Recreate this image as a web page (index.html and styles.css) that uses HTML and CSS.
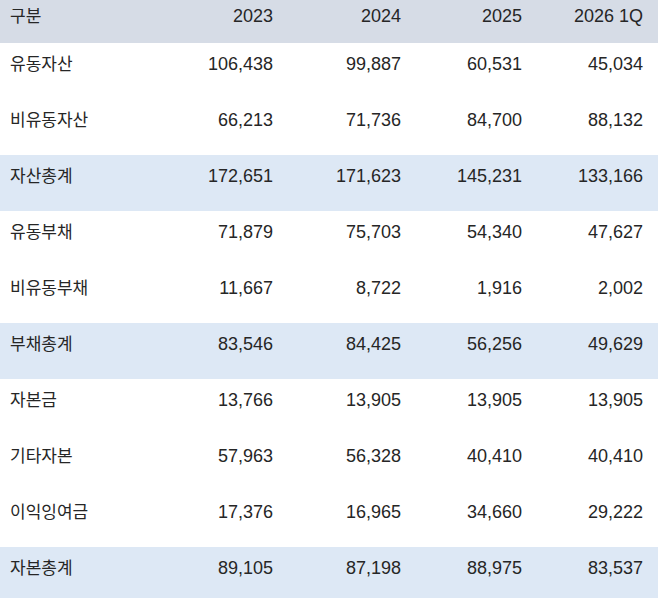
FILE: index.html
```html
<!DOCTYPE html>
<html lang="ko">
<head>
<meta charset="utf-8">
<title>재무상태표</title>
<link rel="stylesheet" href="styles.css">
</head>
<body>
<table class="fin">
  <colgroup>
    <col class="c-label"><col class="c-2023"><col class="c-2024"><col class="c-2025"><col class="c-2026">
  </colgroup>
  <thead>
    <tr class="head">
      <th class="label">구분</th><th>2023</th><th>2024</th><th>2025</th><th>2026 1Q</th>
    </tr>
  </thead>
  <tbody>
    <tr><td class="label">유동자산</td><td>106,438</td><td>99,887</td><td>60,531</td><td>45,034</td></tr>
    <tr><td class="label">비유동자산</td><td>66,213</td><td>71,736</td><td>84,700</td><td>88,132</td></tr>
    <tr class="total"><td class="label">자산총계</td><td>172,651</td><td>171,623</td><td>145,231</td><td>133,166</td></tr>
    <tr><td class="label">유동부채</td><td>71,879</td><td>75,703</td><td>54,340</td><td>47,627</td></tr>
    <tr><td class="label">비유동부채</td><td>11,667</td><td>8,722</td><td>1,916</td><td>2,002</td></tr>
    <tr class="total"><td class="label">부채총계</td><td>83,546</td><td>84,425</td><td>56,256</td><td>49,629</td></tr>
    <tr><td class="label">자본금</td><td>13,766</td><td>13,905</td><td>13,905</td><td>13,905</td></tr>
    <tr><td class="label">기타자본</td><td>57,963</td><td>56,328</td><td>40,410</td><td>40,410</td></tr>
    <tr><td class="label">이익잉여금</td><td>17,376</td><td>16,965</td><td>34,660</td><td>29,222</td></tr>
    <tr class="total"><td class="label">자본총계</td><td>89,105</td><td>87,198</td><td>88,975</td><td>83,537</td></tr>
  </tbody>
</table>
</body>
</html>
```

FILE: styles.css
```css
html, body {
  margin: 0;
  padding: 0;
  background: #ffffff;
}

.fin {
  width: 658px;
  border-collapse: collapse;
  table-layout: fixed;
  font-family: "Liberation Sans", "Noto Sans CJK KR", sans-serif;
  font-size: 18px;
  color: #262626;
}

.c-label { width: 163px; }
.c-2023 { width: 125px; }
.c-2024 { width: 128px; }
.c-2025 { width: 121px; }
.c-2026 { width: 121px; }

.fin th,
.fin td {
  font-weight: normal;
  text-align: right;
  vertical-align: baseline;
  line-height: 20px;
  padding: 10px 15px 0 10px;
  white-space: nowrap;
}

.fin tbody tr {
  height: 56px;
}

.fin .head {
  height: 43px;
  background: #d6dce6;
}

.fin .head th {
  padding-top: 5px;
}

.fin .total {
  background: #dde8f5;
}

.fin .label {
  text-align: left;
  font-family: "Noto Sans CJK KR", "Liberation Sans", sans-serif;
  font-size: 17px;
}
```
